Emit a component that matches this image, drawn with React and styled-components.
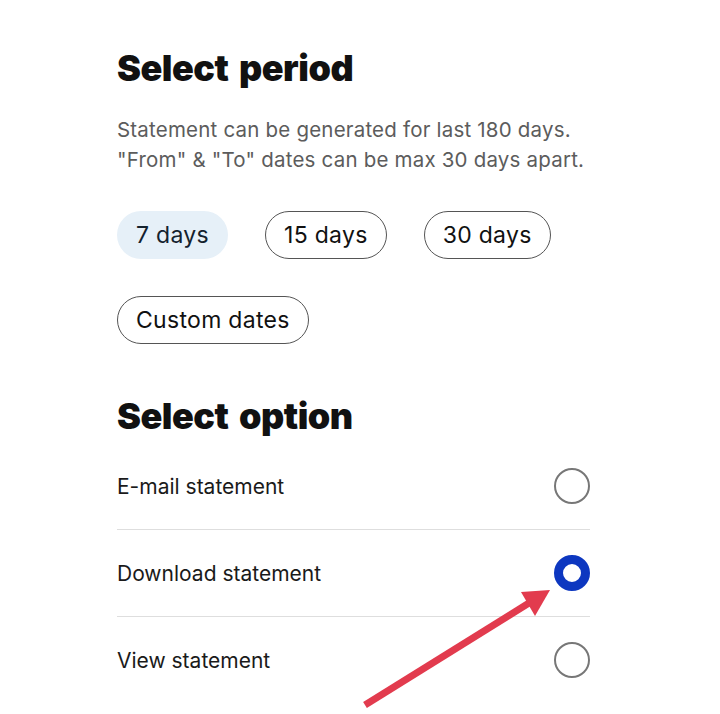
import React, { useState } from 'react';
import styled, { createGlobalStyle } from 'styled-components';

const GlobalStyle = createGlobalStyle`
  body {
    margin: 0;
    background: #fff;
    font-family: "Inter", "Liberation Sans", sans-serif;
  }
`;

const periods = ['7 days', '15 days', '30 days', 'Custom dates'];
const options = ['E-mail statement', 'Download statement', 'View statement'];

function App() {
  const [period, setPeriod] = useState('7 days');
  const [option, setOption] = useState('Download statement');

  return (
    <>
      <GlobalStyle />
      <Page>
        <Title>Select period</Title>
        <Note>
          Statement can be generated for last 180 days.
          <br />
          "From" &amp; "To" dates can be max 30 days apart.
        </Note>
        <ChipGrid>
          {periods.map((p) => (
            <Chip key={p} active={p === period} onClick={() => setPeriod(p)}>
              {p}
            </Chip>
          ))}
        </ChipGrid>
        <OptionTitle>Select option</OptionTitle>
        <OptionList>
          {options.map((o) => (
            <OptionRow key={o} onClick={() => setOption(o)}>
              <OptionLabel>{o}</OptionLabel>
              <Radio checked={o === option} />
            </OptionRow>
          ))}
        </OptionList>
        <Arrow width="200" height="130" viewBox="0 0 200 130">
          <line x1="8" y1="122" x2="172" y2="20" stroke="#e23b4e" strokeWidth="7" />
          <polygon points="193,7 164,9 178,33" fill="#e23b4e" />
        </Arrow>
      </Page>
    </>
  );
}

const Page = styled.div`
  position: relative;
  width: 720px;
  height: 714px;
  padding: 46px 130px 0 117px;
  box-sizing: border-box;
  overflow: hidden;
`;
const Title = styled.h1`
  margin: 0 0 25px;
  font-size: 36px;
  line-height: 44px;
  font-weight: 900;
  color: #111;
  letter-spacing: -0.5px;
  word-spacing: 4px;
`;
const Note = styled.p`
  margin: 0 0 36px;
  font-size: 20.5px;
  line-height: 30px;
  color: #5c5c5c;
  letter-spacing: 0.2px;
  white-space: nowrap;
`;
const ChipGrid = styled.div`
  display: flex;
  flex-wrap: wrap;
  column-gap: 37px;
  row-gap: 37px;
  width: 440px;
  margin-bottom: 50px;
`;
const Chip = styled.button`
  height: 48px;
  padding: 0 18px;
  border-radius: 24px;
  border: 1.5px solid ${(p) => (p.active ? 'transparent' : '#555')};
  background: ${(p) => (p.active ? '#e6f0f8' : '#fff')};
  color: ${(p) => (p.active ? '#14222e' : '#111')};
  font-family: inherit;
  font-size: 23px;
  letter-spacing: 0.3px;
  cursor: pointer;
`;
const OptionTitle = styled.h2`
  margin: 0 0 5px;
  font-size: 36px;
  line-height: 44px;
  font-weight: 900;
  color: #111;
  letter-spacing: -0.5px;
  word-spacing: 4px;
`;
const OptionList = styled.div`
  display: flex;
  flex-direction: column;
`;
const OptionRow = styled.div`
  display: flex;
  align-items: center;
  justify-content: space-between;
  height: 86px;
  border-bottom: 1px solid #dedede;
  cursor: pointer;
  &:last-child {
    border-bottom: none;
  }
`;
const OptionLabel = styled.span`
  font-size: 21px;
  color: #1a1a1a;
`;
const Radio = styled.span`
  width: 36px;
  height: 36px;
  border-radius: 50%;
  box-sizing: border-box;
  border: ${(p) => (p.checked ? '9px solid #0d37c0' : '2px solid #777')};
`;
const Arrow = styled.svg`
  position: absolute;
  left: 357px;
  top: 583px;
`;

export default App;
